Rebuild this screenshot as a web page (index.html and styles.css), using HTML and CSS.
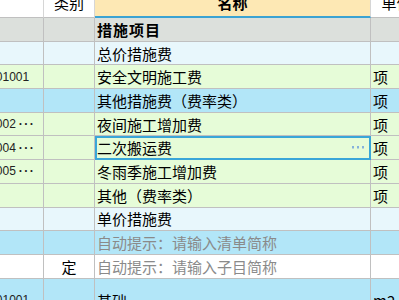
FILE: index.html
```html
<!DOCTYPE html>
<html lang="zh-CN">
<head>
  <meta charset="UTF-8" />
  <meta name="viewport" content="width=device-width, initial-scale=1" />
  <title>措施项目</title>
  <link rel="stylesheet" href="styles.css">
</head>
<body>

  <!-- 表格（已横向滚动） -->
  <div class="sheet">

    <!-- 表头 -->
    <div class="row head">
      <div class="cell"></div>
      <div class="cell center">类别</div>
      <div class="cell name">名称</div>
      <div class="cell center">单位</div>
    </div>

    <div class="row grey">
      <div class="cell"></div>
      <div class="cell"></div>
      <div class="cell bold">措施项目</div>
      <div class="cell"></div>
    </div>

    <div class="row pale">
      <div class="cell"></div>
      <div class="cell"></div>
      <div class="cell">总价措施费</div>
      <div class="cell"></div>
    </div>

    <div class="row green">
      <div class="cell code">011707001001</div>
      <div class="cell"></div>
      <div class="cell">安全文明施工费</div>
      <div class="cell">项</div>
    </div>

    <div class="row cyan">
      <div class="cell"></div>
      <div class="cell"></div>
      <div class="cell">其他措施费（费率类）</div>
      <div class="cell">项</div>
    </div>

    <div class="row green">
      <div class="cell code">0117070002<span class="dots">···</span></div>
      <div class="cell"></div>
      <div class="cell">夜间施工增加费</div>
      <div class="cell">项</div>
    </div>

    <div class="row green">
      <div class="cell code">0117070004<span class="dots">···</span></div>
      <div class="cell"></div>
      <div class="cell selected">二次搬运费
        <svg class="more" width="12" height="3" viewBox="0 0 12 3">
          <rect x="0" y="0" width="2" height="2.5" fill="#86b2dc"/>
          <rect x="5" y="0" width="2" height="2.5" fill="#86b2dc"/>
          <rect x="10" y="0" width="2" height="2.5" fill="#86b2dc"/>
        </svg>
      </div>
      <div class="cell">项</div>
    </div>

    <div class="row green">
      <div class="cell code">0117070005<span class="dots">···</span></div>
      <div class="cell"></div>
      <div class="cell">冬雨季施工增加费</div>
      <div class="cell">项</div>
    </div>

    <div class="row green">
      <div class="cell"></div>
      <div class="cell"></div>
      <div class="cell">其他（费率类）</div>
      <div class="cell">项</div>
    </div>

    <div class="row pale">
      <div class="cell"></div>
      <div class="cell"></div>
      <div class="cell">单价措施费</div>
      <div class="cell"></div>
    </div>

    <div class="row cyan">
      <div class="cell"></div>
      <div class="cell"></div>
      <div class="cell hint">自动提示：请输入清单简称</div>
      <div class="cell"></div>
    </div>

    <div class="row white">
      <div class="cell"></div>
      <div class="cell center">定</div>
      <div class="cell hint">自动提示：请输入子目简称</div>
      <div class="cell"></div>
    </div>

    <div class="row cyan tall">
      <div class="cell code">011701001001</div>
      <div class="cell"></div>
      <div class="cell">基础</div>
      <div class="cell">m2</div>
    </div>

  </div>

</body>
</html>
```

FILE: styles.css
```css
* {
  box-sizing: border-box;
}

body {
  margin: 0;
  padding: 0;
  width: 399px;
  height: 300px;
  overflow: hidden;
  background: white;
  font-family: "Noto Sans CJK SC", "Liberation Sans", sans-serif;
  font-size: 15px;
  color: #000;
}

/* margem negativa = posição da rolagem */
.sheet {
  margin-left: -52px;
  margin-top: -12px;
}

.row {
  display: grid;
  grid-template-columns: 96px 51px 276px 52px;
  height: 23.7px;
}

.cell {
  display: flex;
  align-items: center;
  overflow: hidden;
  white-space: nowrap;
  padding: 0 2px;
  line-height: 1;
  border-right: 1px solid #c0c0c0;
  border-bottom: 1px solid #c0c0c0;
}

.center {
  justify-content: center;
}

.bold {
  font-weight: bold;
  letter-spacing: 1px;
}

.hint {
  color: #8a8a8a;
}

/* cabeçalho */
.head {
  height: 30px;
}

.head .cell {
  background: white;
  border-right-color: #d6d6d6;
}

.head .name {
  justify-content: center;
  font-weight: bold;
  background: #fde8b4;
  border-bottom: 2px solid #3ba3d3;
}

/* cores das linhas */
.grey .cell {
  background: #dce0dc;
}

.pale .cell {
  background: #e8f7fc;
}

.green .cell {
  background: #e6fcd8;
}

.cyan .cell {
  background: #b2e6f8;
}

.white .cell {
  background: white;
}

.tall {
  height: 44px;
}

/* código */
.code {
  font-family: "Liberation Sans", sans-serif;
  font-size: 12px;
  color: #222;
}

.dots {
  margin-left: 3px;
  letter-spacing: 1.5px;
  font-weight: bold;
}

/* célula em edição */
.selected {
  outline: 2px solid #3aa6d8;
  outline-offset: -2px;
}

.more {
  margin-left: auto;
  margin-right: 4px;
}
```
